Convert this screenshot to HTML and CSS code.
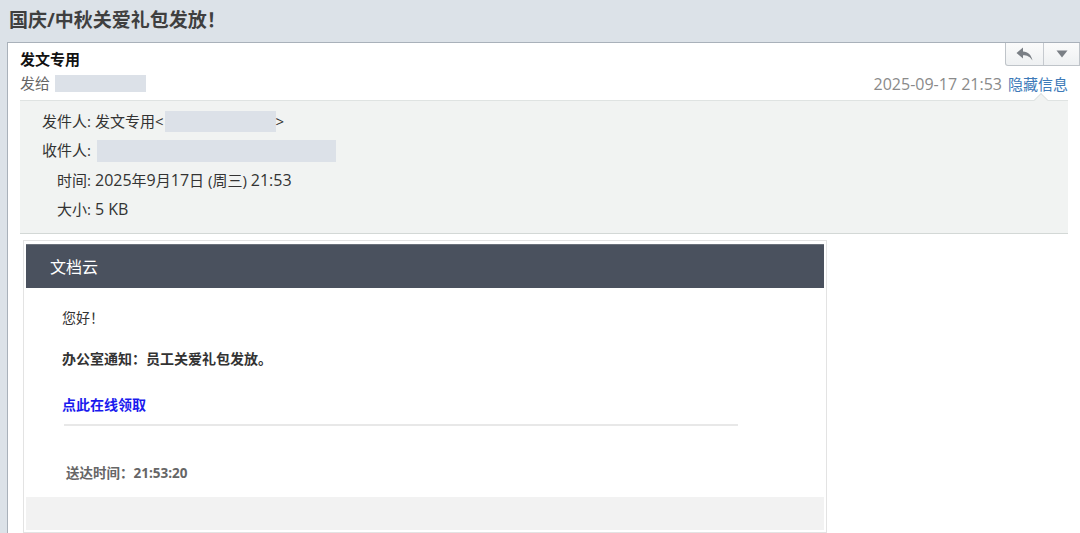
FILE: index.html
```html
<!DOCTYPE html>
<html lang="zh">
<head>
<meta charset="utf-8">
<title>国庆/中秋关爱礼包发放！</title>
<link rel="stylesheet" href="styles.css">
</head>
<body>
<div class="title">国庆/中秋关爱礼包发放！</div>
<div class="panel">
  <div class="head">
    <div class="who">
      <div class="name">发文专用</div>
      <div class="to">发给 <span class="mask mask-to"></span></div>
    </div>
    <div class="side">
      <div class="btns">
        <span class="btn btn-reply">
          <svg width="17" height="14" viewBox="0 0 17 14"><path d="M7 0.5 L0.5 6 L7 11.5 V8.2 C11 8.2 14 9.5 16.5 13.5 C15.5 8 12 4.6 7 4.4 Z" fill="#7a7f85"/></svg>
        </span>
        <span class="btn btn-more">
          <svg width="12" height="8" viewBox="0 0 12 8"><path d="M0.5 0.5 H11.5 L6 7.5 Z" fill="#7a7f85"/></svg>
        </span>
      </div>
      <div class="when"><span class="date">2025-09-17 21:53</span><a class="hide">隐藏信息</a></div>
    </div>
  </div>
  <div class="details">
    <div class="lbl">发件人:</div><div class="val">发文专用&lt;<span class="mask mask-from"></span>&gt;</div>
    <div class="lbl">收件人:</div><div class="val"><span class="mask mask-rcpt"></span></div>
    <div class="lbl">时间:</div><div class="val"><span class="num">2025</span>年<span class="num">9</span>月<span class="num">17</span>日 (周三) <span class="num">21:53</span></div>
    <div class="lbl">大小:</div><div class="val"><span class="num">5 KB</span></div>
  </div>
  <div class="mail">
    <div class="mail-head">文档云</div>
    <div class="mail-body">
      <p class="hello">您好！</p>
      <p class="notice">办公室通知：员工关爱礼包发放。</p>
      <p class="link"><a>点此在线领取</a></p>
      <div class="rule"></div>
      <p class="sent">送达时间：21:53:20</p>
    </div>
    <div class="mail-foot"></div>
  </div>
</div>
</body>
</html>
```
FILE: styles.css
```css
html, body {
  margin: 0;
  height: 100%;
  overflow: hidden;
}
body {
  background: #dce2e8;
  font-family: "Open Sans", "Noto Sans CJK SC", sans-serif;
  color: #333;
}
.title {
  height: 42px;
  line-height: 40px;
  padding-left: 9px;
  font-size: 19px;
  font-weight: bold;
  color: #3f3f3f;
  box-sizing: border-box;
}
.panel {
  margin-left: 7px;
  background: #fff;
  border-top: 1px solid #a9b1ba;
  border-left: 1px solid #a9b1ba;
  height: calc(100% - 42px);
  box-sizing: border-box;
  padding-left: 12px;
}
.head {
  display: flex;
  justify-content: space-between;
}
.who {
  padding-top: 4px;
}
.name {
  font-size: 15px;
  font-weight: bold;
  line-height: 24px;
  color: #111;
}
.to {
  font-size: 15px;
  line-height: 24px;
  color: #666;
  display: flex;
  align-items: center;
}
.mask {
  display: inline-block;
  background: #dce1e8;
}
.mask-to {
  width: 91px;
  height: 17px;
  margin-left: 5px;
}
.side {
  display: flex;
  flex-direction: column;
  align-items: flex-end;
}
.btns {
  display: flex;
  height: 23px;
  border: 1px solid #bfc4c9;
  border-top: none;
  border-bottom-left-radius: 3px;
  background: linear-gradient(#fbfbfb, #eef0f2);
  box-sizing: border-box;
}
.btn {
  display: flex;
  align-items: center;
  justify-content: center;
}
.btn-reply {
  width: 37px;
  border-right: 1px solid #c6cacf;
}
.btn-more {
  width: 35px;
}
.when {
  margin-top: 6px;
  line-height: 24px;
  font-size: 15px;
  color: #8a8a8a;
  padding-right: 12px;
}
.date {
  font-size: 16px;
}
.hide {
  margin-left: 6px;
  color: #3d7ab8;
}
.details {
  position: relative;
  margin: 4px 12px 0 0;
  background: #f1f3f2;
  border-top: 1px solid #dfe3e2;
  border-bottom: 1px solid #d3d8d6;
  padding: 6px 0 8px;
  display: grid;
  grid-template-columns: 71px 1fr;
  column-gap: 4px;
  font-size: 15px;
  line-height: 29.4px;
  color: #333;
}
.details::before {
  content: "";
  position: absolute;
  top: -6px;
  right: 22px;
  width: 9px;
  height: 9px;
  background: #f1f3f2;
  border-top: 1px solid #dfe3e2;
  border-left: 1px solid #dfe3e2;
  transform: rotate(45deg);
}
.lbl {
  text-align: right;
}
.val {
  display: flex;
  align-items: center;
  white-space: pre;
}
.num {
  font-size: 16px;
}
.mask-from {
  width: 111px;
  height: 21px;
  margin-left: 1px;
}
.mask-rcpt {
  width: 239px;
  height: 22px;
  margin-left: 2px;
}
.mail {
  margin: 6px 0 0 3px;
  width: 804px;
  border: 1px solid #e3e3e3;
  padding: 3px 2px 2px;
  box-sizing: border-box;
}
.mail-head {
  height: 44px;
  background: #4a515e;
  border-top: 1px solid #6c727c;
  box-sizing: border-box;
  color: #fff;
  font-size: 16px;
  line-height: 44px;
  padding-left: 24px;
}
.mail-body {
  padding: 19px 0 14px 36px;
}
.mail-body p {
  margin: 0;
  font-size: 14px;
  line-height: 22px;
}
.hello {
  color: #333;
}
.notice {
  margin-top: 19px !important;
  font-weight: bold;
  color: #333;
}
.link {
  margin-top: 24px !important;
}
.link a {
  color: #1a1aee;
  font-weight: bold;
}
.rule {
  margin: 8px 0 0 2px;
  width: 674px;
  height: 2px;
  background: #e8e8e8;
}
.mail-body .sent {
  margin-top: 37px;
  margin-left: 4px;
  font-size: 13.5px;
  line-height: 20px;
  font-weight: bold;
  color: #666;
}
.mail-foot {
  height: 33px;
  background: #f2f2f2;
}
```
